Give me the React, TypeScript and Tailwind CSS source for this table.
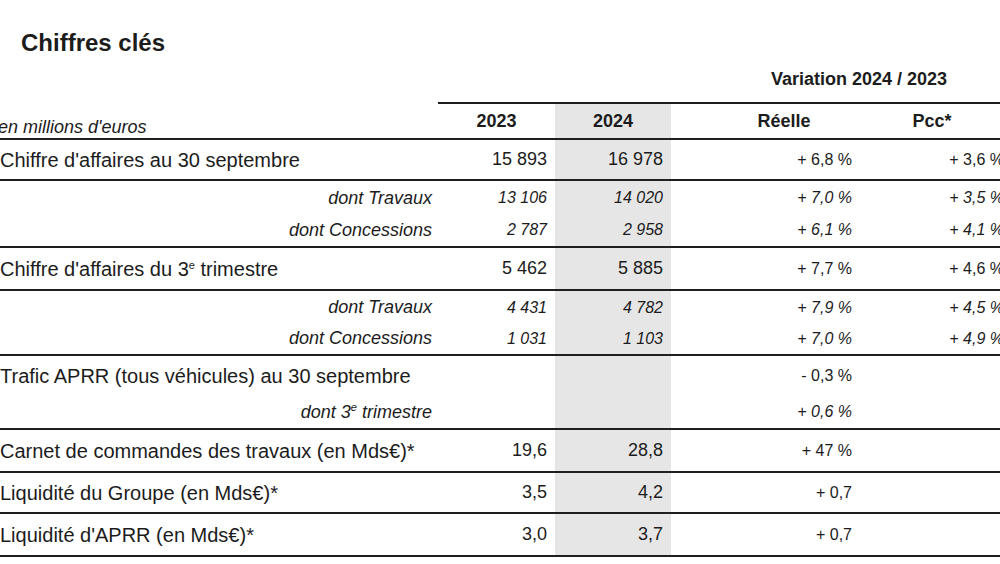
import React from "react";

const GRID = "grid grid-cols-[438px_117px_116px_226px_130px]";
const GRAY = "bg-[#e6e6e6]";

type Sub = { label: React.ReactNode; a?: string; b?: string; r?: string; p?: string; h: string; italicNums?: boolean; rItalic?: boolean };

function MainRow({ label, a, b, r, p, h }: { label: React.ReactNode; a?: string; b?: string; r?: string; p?: string; h: string }) {
  return (
    <div className={`${GRID} border-t-2 border-[#1f1f1f] ${h}`}>
      <div className="flex items-center text-[20px] whitespace-nowrap">{label}</div>
      <div className="flex items-center justify-end pr-[8px] text-[18px]">{a}</div>
      <div className={`flex items-center justify-end pr-[8px] text-[18px] ${GRAY}`}>{b}</div>
      <div className="flex items-center justify-end pr-[45px] text-[16px] whitespace-nowrap">{r}</div>
      <div className="flex items-center justify-end pr-[23px] text-[16px] whitespace-nowrap">{p}</div>
    </div>
  );
}

function SubRow({ label, a, b, r, p, h, italicNums = true, rItalic = true }: Sub) {
  return (
    <div className={`${GRID} ${h}`}>
      <div className="flex items-center justify-end pr-[6px] text-[18px] italic whitespace-nowrap">{label}</div>
      <div className={`flex items-center justify-end pr-[8px] text-[16px] ${italicNums ? "italic" : ""}`}>{a}</div>
      <div className={`flex items-center justify-end pr-[8px] text-[16px] ${italicNums ? "italic" : ""} ${GRAY}`}>{b}</div>
      <div className={`flex items-center justify-end pr-[45px] text-[16px] whitespace-nowrap ${rItalic ? "italic" : ""}`}>{r}</div>
      <div className="flex items-center justify-end pr-[23px] text-[16px] italic whitespace-nowrap">{p}</div>
    </div>
  );
}

const Sup = () => <span className="text-[11px] relative top-[-7px]">e</span>;

export default function App() {
  return (
    <div className="w-[1000px] h-[564px] overflow-hidden bg-white text-[#1c1c1c] font-['Liberation_Sans',Arial,sans-serif]">
      <div className="h-[60px] pt-[29px] pl-[21px]">
        <div className="text-[24px] leading-[28px] font-bold">Chiffres clés</div>
      </div>
      <div className="w-[1027px]">
        {/* Variation header */}
        <div className={`${GRID} h-[42px]`}>
          <div />
          <div />
          <div />
          <div className="col-span-2 flex items-center justify-center pl-[20px] pb-[4px] text-[18px] font-bold whitespace-nowrap">
            Variation 2024 / 2023
          </div>
        </div>
        {/* Column header */}
        <div className={`${GRID} h-[36px]`}>
          <div className="flex items-end ml-[-2px] text-[18px] italic leading-[22px] whitespace-nowrap">en millions d'euros</div>
          <div className="flex items-center justify-center border-t-2 border-[#1f1f1f] text-[18px] font-bold">2023</div>
          <div className={`flex items-center justify-center border-t-2 border-[#1f1f1f] text-[18px] font-bold ${GRAY}`}>2024</div>
          <div className="flex items-center justify-center border-t-2 border-[#1f1f1f] text-[18px] font-bold">Réelle</div>
          <div className="flex items-center justify-center pr-[60px] border-t-2 border-[#1f1f1f] text-[18px] font-bold">Pcc*</div>
        </div>

        <MainRow h="h-[41px]" label="Chiffre d'affaires au 30 septembre" a="15 893" b="16 978" r="+ 6,8 %" p="+ 3,6 %" />

        <div className="border-t-2 border-[#1f1f1f]">
          <div className={`${GRID} h-[1px]`}><div /><div /><div className={GRAY} /><div /><div /></div>
          <SubRow h="h-[32px]" label="dont Travaux" a="13 106" b="14 020" r="+ 7,0 %" p="+ 3,5 %" />
          <SubRow h="h-[32px]" label="dont Concessions" a="2 787" b="2 958" r="+ 6,1 %" p="+ 4,1 %" />
        </div>

        <MainRow
          h="h-[43px]"
          label={<span>Chiffre d'affaires du 3<Sup /> trimestre</span>}
          a="5 462"
          b="5 885"
          r="+ 7,7 %"
          p="+ 4,6 %"
        />

        <div className="border-t-2 border-[#1f1f1f]">
          <div className={`${GRID} h-[1px]`}><div /><div /><div className={GRAY} /><div /><div /></div>
          <SubRow h="h-[31px]" label="dont Travaux" a="4 431" b="4 782" r="+ 7,9 %" p="+ 4,5 %" />
          <SubRow h="h-[31px]" label="dont Concessions" a="1 031" b="1 103" r="+ 7,0 %" p="+ 4,9 %" />
        </div>

        <div className="border-t-2 border-[#1f1f1f]">
          <div className={`${GRID} h-[40px]`}>
            <div className="flex items-center text-[20px] whitespace-nowrap">Trafic APRR (tous véhicules) au 30 septembre</div>
            <div />
            <div className={GRAY} />
            <div className="flex items-center justify-end pr-[45px] text-[16px] whitespace-nowrap">- 0,3 %</div>
            <div />
          </div>
          <SubRow h="h-[32px]" label={<span>dont 3<Sup /> trimestre</span>} r="+ 0,6 %" />
        </div>

        <MainRow h="h-[43px]" label="Carnet de commandes des travaux (en Mds€)*" a="19,6" b="28,8" r="+ 47 %" />
        <MainRow h="h-[41px]" label="Liquidité du Groupe (en Mds€)*" a="3,5" b="4,2" r="+ 0,7" />
        <MainRow h="h-[43px]" label="Liquidité d'APRR (en Mds€)*" a="3,0" b="3,7" r="+ 0,7" />
        <div className="border-t-2 border-[#1f1f1f]" />
      </div>
    </div>
  );
}
